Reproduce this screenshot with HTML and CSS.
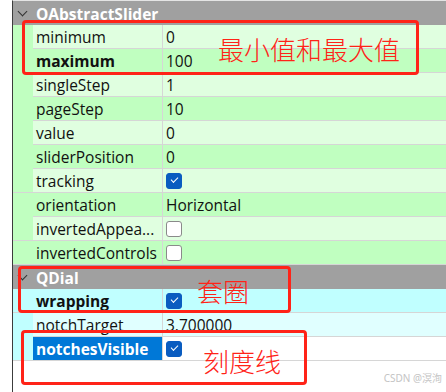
FILE: index.html
```html
<!DOCTYPE html>
<html lang="zh">
<head>
  <meta charset="UTF-8">
  <title>QDial properties</title>
  <link rel="stylesheet" href="styles.css">
</head>
<body>
  <div class="page">
    <div class="tree">
      <div class="group">
        <span class="chevron"></span>
        <span class="group-name">QAbstractSlider</span>
      </div>
      <div class="prop light"><span class="indent"></span><span class="name">minimum</span><span class="value">0</span></div>
      <div class="prop dark"><span class="indent"></span><span class="name bold">maximum</span><span class="value">100</span></div>
      <div class="prop light"><span class="indent"></span><span class="name">singleStep</span><span class="value">1</span></div>
      <div class="prop dark"><span class="indent"></span><span class="name">pageStep</span><span class="value">10</span></div>
      <div class="prop light"><span class="indent"></span><span class="name">value</span><span class="value">0</span></div>
      <div class="prop dark"><span class="indent"></span><span class="name">sliderPosition</span><span class="value">0</span></div>
      <div class="prop light"><span class="indent"></span><span class="name">tracking</span><span class="value"><span class="check on"></span></span></div>
      <div class="prop dark"><span class="indent"></span><span class="name">orientation</span><span class="value">Horizontal</span></div>
      <div class="prop light"><span class="indent"></span><span class="name">invertedAppea...</span><span class="value"><span class="check"></span></span></div>
      <div class="prop dark"><span class="indent"></span><span class="name">invertedControls</span><span class="value"><span class="check"></span></span></div>

      <div class="group">
        <span class="chevron"></span>
        <span class="group-name">QDial</span>
      </div>
      <div class="prop cyan-dark"><span class="indent"></span><span class="name bold">wrapping</span><span class="value"><span class="check on"></span></span></div>
      <div class="prop cyan-light"><span class="indent"></span><span class="name">notchTarget</span><span class="value">3.700000</span></div>
      <div class="prop selected"><span class="indent"></span><span class="name bold">notchesVisible</span><span class="value"><span class="check on"></span></span></div>
    </div>

    <div class="mark mark-range"></div>
    <div class="note note-range">最小值和最大值</div>
    <div class="mark mark-wrap"></div>
    <div class="note note-wrap">套圈</div>
    <div class="mark mark-notch"></div>
    <div class="note note-notch">刻度线</div>

    <div class="watermark">CSDN @溟洵</div>
  </div>
</body>
</html>
```

FILE: styles.css
```css
body {
  margin: 0;
  background-color: #ffffff;
  font-family: "Open Sans", "Noto Sans", sans-serif;
  font-size: 15.5px;
  color: #111;
}

.page {
  position: relative;
  width: 446px;
  height: 392px;
  overflow: hidden;
}

.tree {
  margin-left: 12px;
  height: 392px;
  border-left: 1px solid #3c3c3c;
  border-top: 1px solid #e4e4e4;
  box-sizing: border-box;
}

.group {
  display: flex;
  align-items: center;
  height: 24px;
  background-color: #a0a0a0;
  color: #ffffff;
  font-weight: bold;
}

.chevron {
  width: 6px;
  height: 6px;
  margin: -4px 0 0 6px;
  border-right: 1.5px solid #333;
  border-bottom: 1.5px solid #333;
  transform: rotate(45deg);
}

.group-name {
  margin-left: 10px;
  padding-top: 1px;
}

.prop {
  display: grid;
  grid-template-columns: 20px 130px 1fr;
  height: 24px;
  box-sizing: border-box;
  border-bottom: 1px solid #d6d6d6;
  line-height: 23px;
}

.name {
  padding: 1px 0 0 3px;
  border-right: 1px solid #d6d6d6;
  white-space: nowrap;
  overflow: hidden;
}

.value {
  display: flex;
  align-items: center;
  padding: 1px 0 0 3px;
}

.bold {
  font-weight: bold;
}

.light { background-color: #e0ffe0; }
.dark { background-color: #c0ffc0; }
.light .indent, .dark .indent { background-color: #c0ffc0; }

.cyan-dark { background-color: #c0ffff; }
.cyan-light { background-color: #e0ffff; }
.cyan-dark .indent, .cyan-light .indent, .selected .indent { background-color: #c0ffff; }

.selected { background-color: #ffffff; }
.selected .name {
  background-color: #0078d7;
  color: #ffffff;
}

.check {
  width: 14px;
  height: 14px;
  margin-top: -1px;
  border: 1px solid #8a8a8a;
  border-radius: 3px;
  background-color: #ffffff;
  position: relative;
}

.check.on {
  border-color: #0a5cc0;
  background-color: #0a5cc0;
}

.check.on::after {
  content: "";
  position: absolute;
  left: 4px;
  top: 3px;
  width: 6px;
  height: 3px;
  border-left: 1px solid #ffffff;
  border-bottom: 1px solid #ffffff;
  transform: rotate(-45deg);
}

.mark {
  position: absolute;
  border: 3px solid #ff2318;
  border-radius: 4px;
}

.mark-range { left: 22px; top: 20px; width: 391px; height: 49px; }
.mark-wrap { left: 18px; top: 266px; width: 267px; height: 41px; }
.mark-notch { left: 21px; top: 330px; width: 280px; height: 49px; }

.note {
  position: absolute;
  font-family: "Noto Sans CJK SC", sans-serif;
  font-weight: 300;
  font-size: 26px;
  line-height: 26px;
  color: #ff2318;
}

.note-range { left: 218px; top: 36px; }
.note-wrap { left: 197px; top: 278px; }
.note-notch { left: 203px; top: 348px; }

.watermark {
  position: absolute;
  right: 4px;
  bottom: 7px;
  font-family: "Noto Sans", "Noto Sans CJK SC", sans-serif;
  font-size: 10px;
  color: #c4c4c4;
}
```
